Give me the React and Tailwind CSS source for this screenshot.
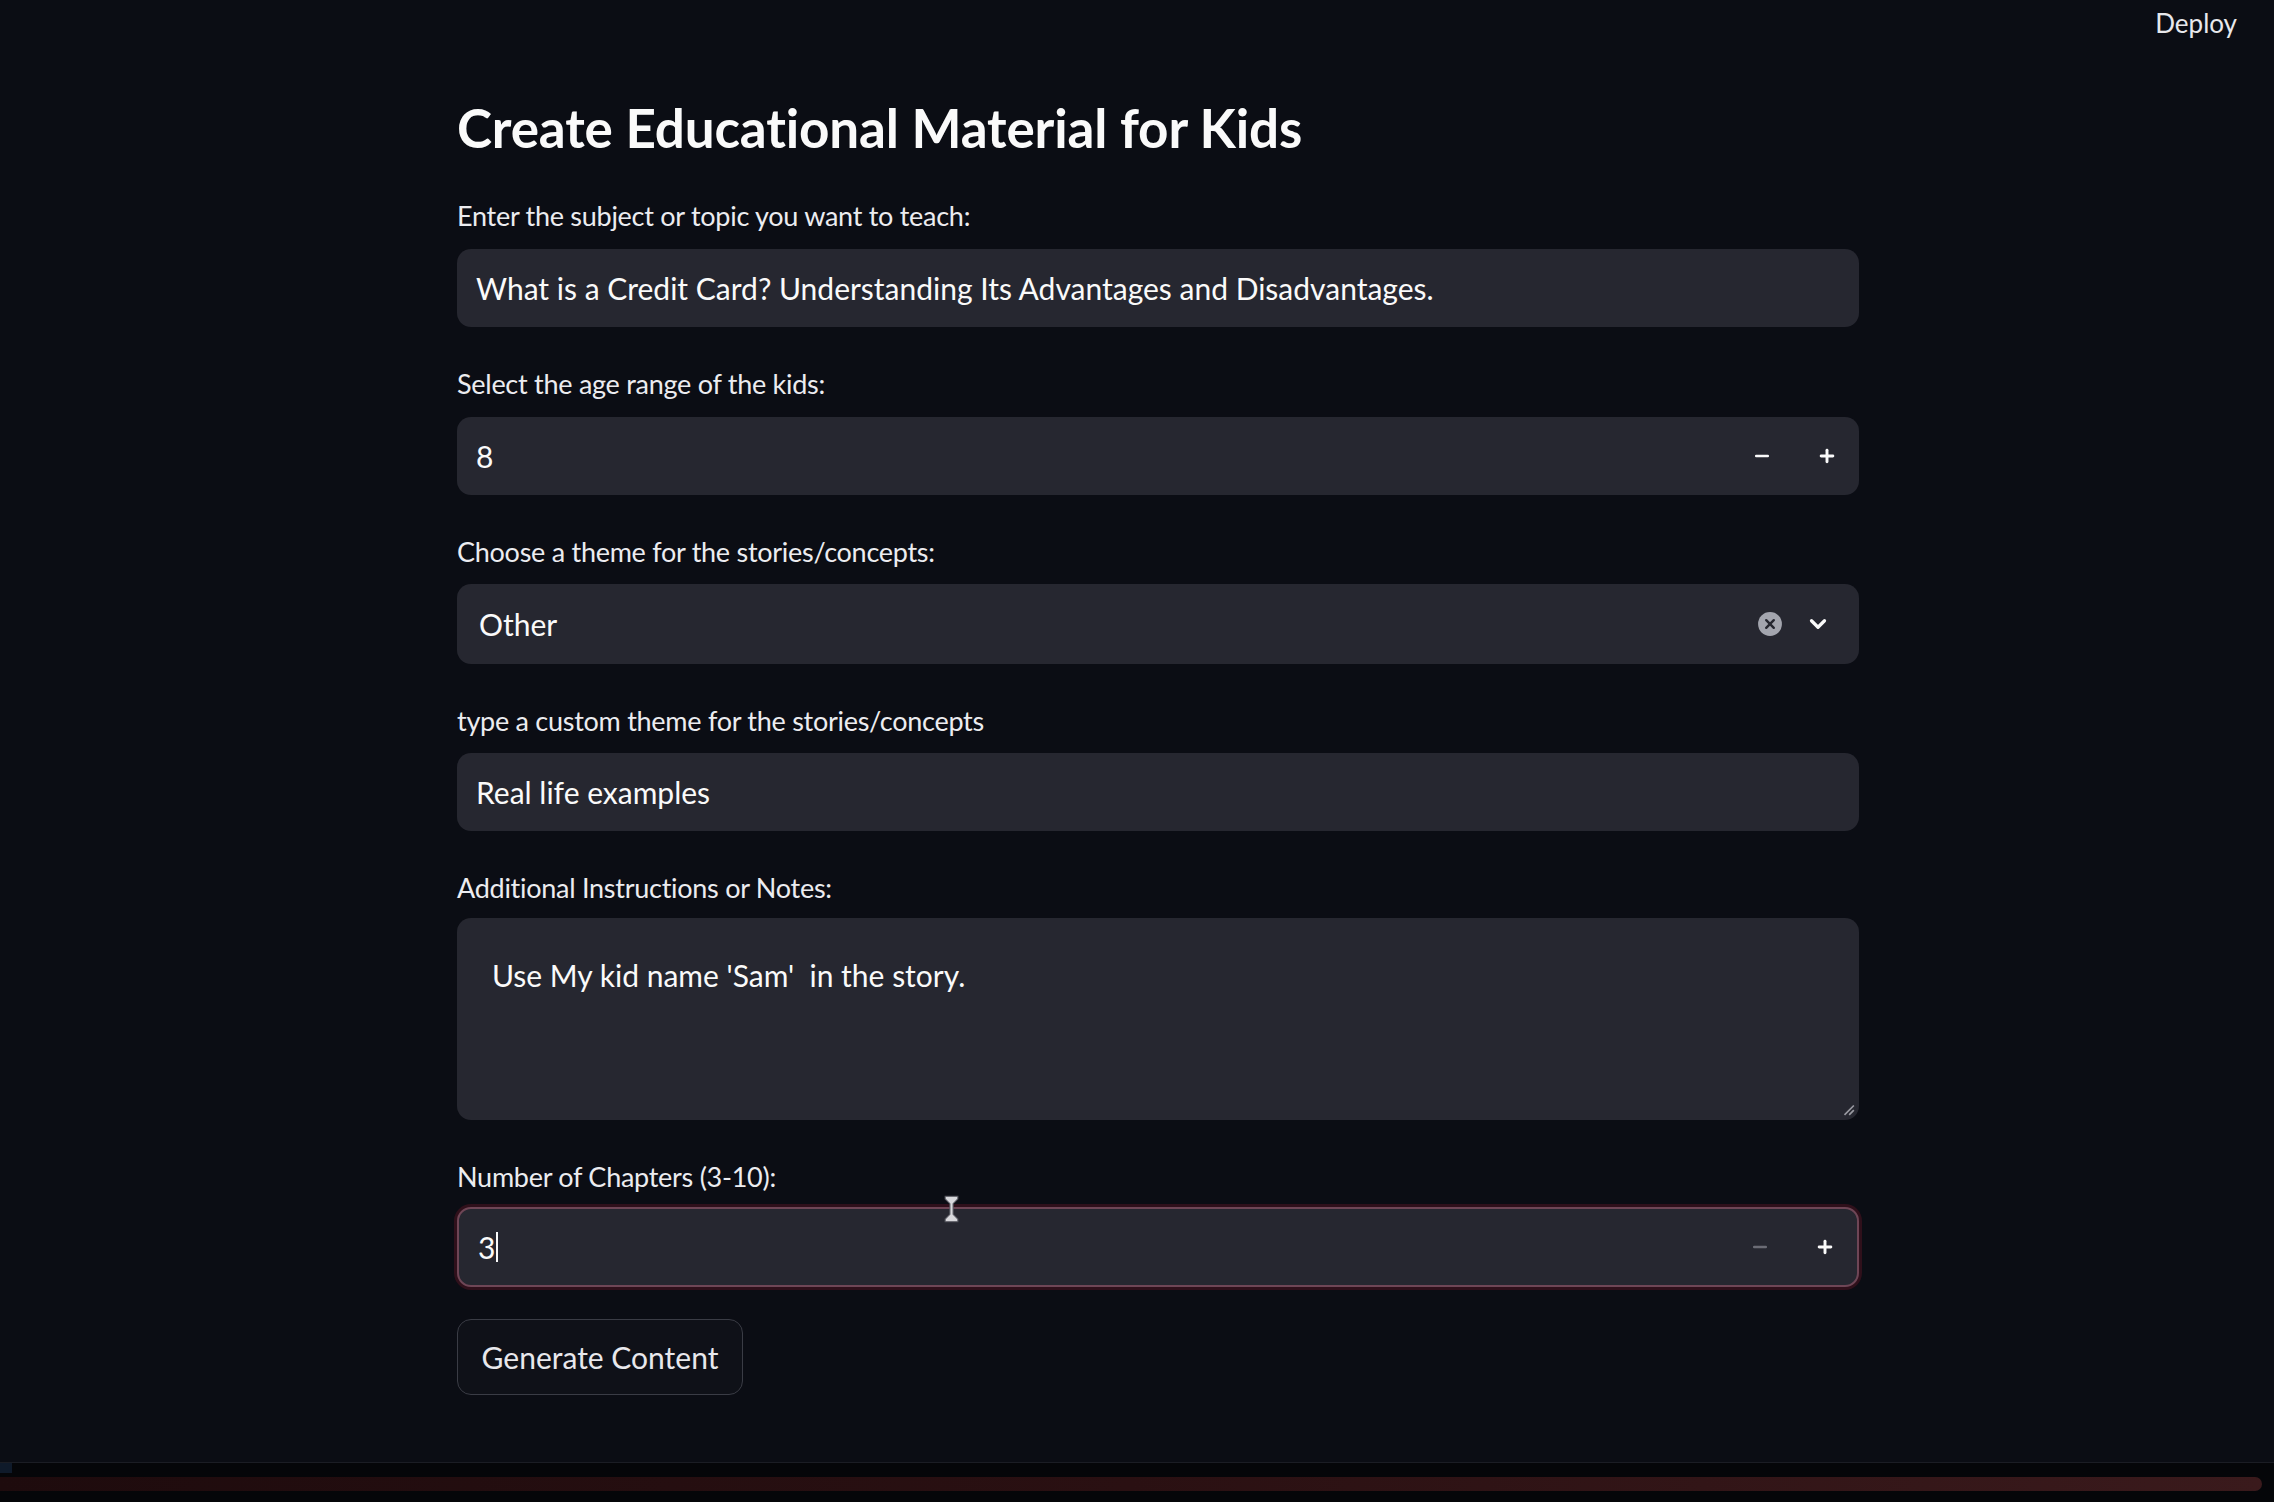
import { Minus, Plus, ChevronDown } from "lucide-react";

function Label({ children }) {
  return (
    <div className="h-8 text-[27px] leading-8 text-[#ececf0] tracking-[-0.01em]">
      {children}
    </div>
  );
}

function TextInput({ value }) {
  return (
    <div className="flex h-[78px] items-center rounded-[14px] bg-[#262730] pl-[19px] text-[30px] text-[#fafafa]">
      {value}
    </div>
  );
}

function NumberInput({ value, focused, minDisabled }) {
  return (
    <div
      className={
        focused
          ? "flex h-[80px] items-center rounded-[14px] border-2 border-[#6e4656] bg-[#262730] shadow-[0_0_0_3px_rgba(90,20,35,0.45)]"
          : "flex h-[78px] items-center rounded-[14px] bg-[#262730]"
      }
    >
      <div className="flex flex-1 items-center pl-[19px] text-[30px] text-[#fafafa]">
        {value}
        {focused && <span className="ml-[1px] h-[30px] w-[2px] bg-[#fafafa]" />}
      </div>
      <div className="flex h-full w-[65px] items-center justify-center">
        <Minus
          className={minDisabled ? "size-[20px] text-[#6b6c75]" : "size-[20px] text-[#fafafa]"}
          strokeWidth={3}
        />
      </div>
      <div className="flex h-full w-[65px] items-center justify-center">
        <Plus className="size-[20px] text-[#fafafa]" strokeWidth={3.5} />
      </div>
    </div>
  );
}

function ClearIcon() {
  return (
    <svg viewBox="0 0 24 24" className="size-[26px]">
      <circle cx="12" cy="12" r="11" fill="#a3a5ae" />
      <path d="M8.5 8.5l7 7M15.5 8.5l-7 7" stroke="#262730" strokeWidth="2.2" strokeLinecap="round" />
    </svg>
  );
}

function Cursor() {
  return (
    <svg viewBox="0 0 16 28" className="absolute left-[943px] top-[1194px] h-[30px] w-[17px]">
      <path
        d="M2 2h12v2.5L9.5 9v10l4.5 4.5V26H2v-2.5L6.5 19V9L2 4.5z"
        fill="#d8d8dc"
        stroke="#55565e"
        strokeWidth="1"
      />
    </svg>
  );
}

export default function App() {
  return (
    <div className="relative flex h-[1502px] w-full flex-col overflow-hidden bg-[#0b0d14] font-['Lato','Noto_Sans',sans-serif]">
      <header className="flex h-[46px] items-center justify-end pr-[37px]">
        <span className="text-[26px] text-[#e8e8ec]">Deploy</span>
      </header>

      <main className="ml-[457px] w-[1402px] flex-1">
        <h1 className="mt-[54px] text-[53px] font-bold leading-[56px] text-[#fafafa] tracking-[-0.003em]">
          Create Educational Material for Kids
        </h1>

        <div className="mt-[44px]">
          <Label>Enter the subject or topic you want to teach:</Label>
          <div className="mt-[17px]">
            <TextInput value="What is a Credit Card? Understanding Its Advantages and Disadvantages." />
          </div>
        </div>

        <div className="mt-[41px]">
          <Label>Select the age range of the kids:</Label>
          <div className="mt-[17px]">
            <NumberInput value="8" />
          </div>
        </div>

        <div className="mt-[41px]">
          <Label>Choose a theme for the stories/concepts:</Label>
          <div className="mt-[16px] flex h-[80px] items-center rounded-[14px] bg-[#262730]">
            <div className="flex-1 pl-[22px] text-[30px] text-[#fafafa]">Other</div>
            <ClearIcon />
            <ChevronDown className="ml-[22px] mr-[28px] size-[26px] text-[#fafafa]" strokeWidth={3} />
          </div>
        </div>

        <div className="mt-[41px]">
          <Label>type a custom theme for the stories/concepts</Label>
          <div className="mt-[16px]">
            <TextInput value="Real life examples" />
          </div>
        </div>

        <div className="mt-[41px]">
          <Label>Additional Instructions or Notes:</Label>
          <div className="relative mt-[14px] h-[202px] rounded-[14px] bg-[#262730] pl-[35px] pt-[37px] text-[30px] leading-[40px] text-[#fafafa]">
            Use My kid name 'Sam'&nbsp; in the story.
            <svg viewBox="0 0 12 12" className="absolute bottom-[4px] right-[4px] size-[14px]">
              <path d="M11 3L3 11M11 7L7 11" stroke="#9a9aa2" strokeWidth="1.4" />
            </svg>
          </div>
        </div>

        <div className="mt-[41px]">
          <Label>Number of Chapters (3-10):</Label>
          <div className="mt-[14px]">
            <NumberInput value="3" focused minDisabled />
          </div>
        </div>

        <button className="mt-[32px] flex h-[76px] w-[286px] items-center justify-center rounded-[14px] border border-[#3a3c45] bg-[#0f1118] text-[30px] text-[#e8e8ec]">
          Generate Content
        </button>
      </main>

      <footer className="flex h-[40px] flex-col border-t border-[#1b1d24] bg-[#050609]">
        <div className="flex h-[14px] items-start">
          <div className="h-[10px] w-[12px] bg-[#0f1a2a]" />
        </div>
        <div className="mr-[12px] h-[14px] rounded-r-full bg-gradient-to-r from-[#1e0b0d] via-[#2a1012] to-[#3a1a1c]" />
      </footer>

      <Cursor />
    </div>
  );
}
